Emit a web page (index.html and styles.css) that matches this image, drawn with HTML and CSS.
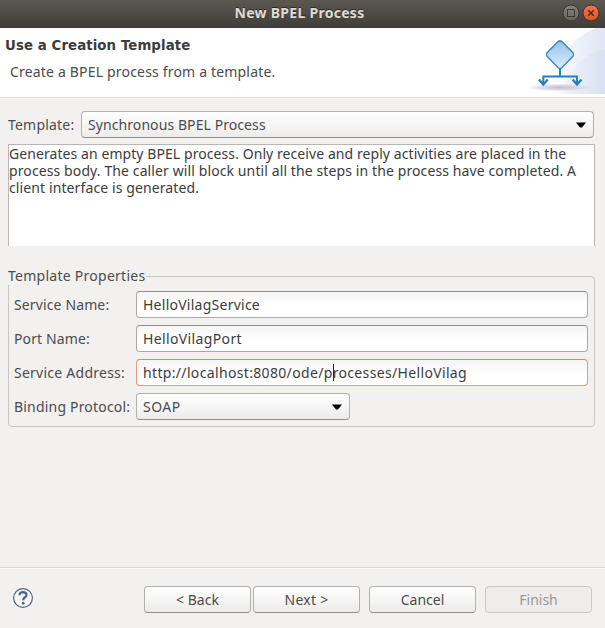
FILE: index.html
```html
<!DOCTYPE html>
<html lang="en">
<head>
<meta charset="utf-8">
<title>New BPEL Process</title>
<link rel="stylesheet" href="styles.css">
</head>
<body>
<div class="titlebar">
  <span class="title">New BPEL Process</span>
  <svg class="controls" width="46" height="20" viewBox="0 0 46 20">
    <defs>
      <linearGradient id="gray" x1="0" y1="0" x2="0" y2="1"><stop offset="0" stop-color="#85847c"/><stop offset="1" stop-color="#65645e"/></linearGradient>
      <linearGradient id="orange" x1="0" y1="0" x2="0" y2="1"><stop offset="0" stop-color="#f4744e"/><stop offset="1" stop-color="#e4501f"/></linearGradient>
    </defs>
    <circle cx="11" cy="10" r="8" fill="url(#gray)" stroke="#373632"/>
    <rect x="7.500" y="6.500" width="7" height="7" fill="none" stroke="#3b3a36"/>
    <circle cx="31" cy="10" r="8" fill="url(#orange)" stroke="#373632"/>
    <path d="M28.300 7.300l5.400 5.400M33.700 7.300l-5.400 5.400" stroke="#4a2a1c" stroke-width="1.500"/>
  </svg>
</div>
<header class="banner">
  <div>
    <h1>Use a Creation Template</h1>
    <p>Create a BPEL process from a template.</p>
  </div>
  <svg class="art" width="75" height="69" viewBox="0 0 75 69">
    <defs>
      <linearGradient id="swoop" x1="0" y1="0" x2="1" y2="0"><stop offset="0" stop-color="#fff"/><stop offset="1" stop-color="#dfe5f5"/></linearGradient>
      <linearGradient id="swoop2" x1="0" y1="0" x2="1" y2="0"><stop offset="0" stop-color="#edf1fa"/><stop offset="1" stop-color="#d5def2"/></linearGradient>
      <linearGradient id="blue" x1="0" y1="0" x2="0" y2="1"><stop offset="0" stop-color="#98c2ea"/><stop offset="1" stop-color="#d9edf8"/></linearGradient>
      <radialGradient id="shadow"><stop offset="0" stop-color="#bdb3c9" stop-opacity=".9"/><stop offset=".6" stop-color="#cfc9dc" stop-opacity=".6"/><stop offset="1" stop-color="#d8d8e8" stop-opacity="0"/></radialGradient>
    </defs>
    <path d="M75 0H66Q40 10 28 36Q22 50 20 66H75Z" fill="url(#swoop)"/>
    <path d="M75 21Q53 26 42 44Q36 55 34 66H75Z" fill="url(#swoop2)" opacity=".7"/>
    <ellipse cx="29" cy="59.500" rx="34" ry="4" fill="url(#shadow)"/>
    <path d="M28.200 13.500Q30 12 31.800 13.500L43 24.700Q44.300 26.500 43 28.300L31.800 39.800Q30 41.300 28.200 39.800L17 28.300Q15.700 26.500 17 24.700Z" fill="url(#blue)" stroke="#3284c5" stroke-width="1.300"/>
    <path d="M30 41V48M13.300 57V48.500H47V57" fill="none" stroke="#1f80bd" stroke-width="1.900"/>
    <path d="M9 51.500L13.300 56.500L17.700 51.500M42.700 51.500L47 56.500L51.500 51.500" fill="none" stroke="#1f80bd" stroke-width="2.300"/>
  </svg>
</header>
<main>
  <div class="template-row">
    <span class="label t-template">Template:</span>
    <div class="combo t-sync"><span>Synchronous BPEL Process</span><svg width="10" height="6"><path d="M0 .5H10L6 5.500H4Z"/></svg></div>
  </div>
  <div class="description">
    <div class="d1">Generates an empty BPEL process. Only receive and reply activities are placed in the</div>
    <div class="d2">process body. The caller will block until all the steps in the process have completed. A</div>
    <div class="d3">client interface is generated.</div>
  </div>
  <fieldset>
    <legend>Template Properties</legend>
    <div class="form">
      <span class="label">Service Name:</span><div class="field f-name">HelloVilagService</div>
      <span class="label">Port Name:</span><div class="field f-port">HelloVilagPort</div>
      <span class="label t-address">Service Address:</span><div class="field focused">http://localhost:8080/ode/p<i class="caret"></i>rocesses/HelloVilag</div>
      <span class="label t-binding">Binding Protocol:</span><div class="combo small"><span>SOAP</span><svg width="10" height="6"><path d="M0 .5H10L6 5.500H4Z"/></svg></div>
    </div>
  </fieldset>
</main>
<footer>
  <svg class="help" width="22" height="22" viewBox="0 0 22 22">
    <circle cx="11" cy="11" r="9.400" fill="#f6f6f7" stroke="#4c6285" stroke-width="1.200"/>
    <path d="M7.500 8.300Q7.400 5.300 11 5.200Q14.500 5.300 14.500 8Q14.500 9.400 12.800 10.500Q11.200 11.500 11.200 13.300" fill="none" stroke="#4c6285" stroke-width="2.200"/>
    <circle cx="11.200" cy="16.200" r="1.400" fill="#4c6285"/>
  </svg>
  <div class="buttons">
    <div class="button">&lt; Back</div><div class="button next">Next &gt;</div><div class="button cancel">Cancel</div><div class="button finish">Finish</div>
  </div>
</footer>
</body>
</html>
```
FILE: styles.css
```css
* { box-sizing: border-box; }
body {
  margin: 0;
  width: 605px;
  height: 628px;
  display: flex;
  flex-direction: column;
  overflow: hidden;
  background: #f2f1f0;
  color: #4c4c4c;
  font: 14px/17px "Noto Sans", sans-serif;
  white-space: nowrap;
}
svg { display: block; flex: none; }
.titlebar {
  height: 28px;
  display: grid;
  grid-template-columns: 1fr auto 1fr;
  align-items: center;
  padding-bottom: 2px;
  background: linear-gradient(#5b5851, #3e3d39);
}
.title {
  grid-column: 2;
  margin: 0 6px 2px 0;
  font-weight: bold;
  letter-spacing: .28px;
  color: #dfdbd2;
  text-shadow: 0 -1px #2b2a28;
}
.controls { justify-self: end; margin-right: -1px; }
.banner {
  height: 70px;
  display: flex;
  justify-content: space-between;
  background: #fff;
  border-bottom: 1px solid #dcdad8;
}
h1 {
  margin: 9px 0 0 5px;
  font: bold 13.333px/18px "DejaVu Sans", sans-serif;
  letter-spacing: .08px;
  color: #3c3c3c;
}
.banner p { margin: 8px 0 0 10px; letter-spacing: .18px; }
main { padding: 13px 10px 0 8px; flex: 1; border-top: 1px solid #fafaf9; }
.template-row { display: flex; height: 27px; align-items: center; margin-top: -1px; }
.label { letter-spacing: .13px; }
.template-row .label { width: 73px; letter-spacing: .2px; }
.t-address { letter-spacing: .25px; }
.t-binding { letter-spacing: .19px; }
.combo {
  height: 27px;
  flex: 1;
  display: flex;
  align-items: center;
  justify-content: space-between;
  padding: 0 7px 1px 6px;
  border: 1px solid #b2b1b0;
  border-bottom-color: #8f8e8d;
  border-radius: 4px;
  background: linear-gradient(#fff, #edeceb);
  letter-spacing: .08px;
}
.combo svg { fill: #000; margin-top: 1px; }
.template-row .combo { margin-right: 1px; }
.description {
  height: 102px;
  margin: 6px 0 0;
  padding: 0;
  border: 1px solid #b7b6b4;
  border-bottom: 0;
  background: #fff;
  color: #3c3c3c;
}
.d1 { letter-spacing: .075px; }
.d2 { letter-spacing: .107px; }
.d3 { letter-spacing: .11px; }
fieldset {
  height: 160px;
  margin: 21px 0 0;
  padding: 0;
  border: 1px solid #c7c6c4;
  border-radius: 4px;
}
legend { margin-left: -1px; padding: 0 1px 0 0; height: 18px; letter-spacing: .26px; }
.form {
  display: grid;
  grid-template-columns: 122px 452px;
  row-gap: 7px;
  align-items: center;
  padding: 6px 0 0 5px;
}
.field {
  height: 27px;
  padding: 4px 6px;
  border: 1px solid #aaa9a8;
  border-top-color: #8f8e8d;
  border-radius: 4px;
  background: linear-gradient(#f5f5f5, #fff 60%);
  color: #3c3c3c;
}
.f-name { letter-spacing: .25px; }
.f-port { letter-spacing: .37px; }
.focused { border-color: #e89a7d; border-top-color: #df845f; letter-spacing: .34px; }
.caret { display: inline-block; width: 1px; height: 17px; margin: 0 -1px 0 0; vertical-align: top; background: #222; }
.combo.small { width: 214px; letter-spacing: .5px; }
footer {
  height: 61px;
  display: flex;
  justify-content: space-between;
  align-items: flex-start;
  padding: 18px 13px 0 12px;
  border-top: 1px solid #dcdad8;
  box-shadow: inset 0 1px #fafaf9;
}
.help { margin-top: 1px; }
.buttons { display: flex; gap: 2px; }
.button {
  width: 107px;
  height: 27px;
  padding-top: 4px;
  border: 1px solid #b2b1b0;
  border-bottom-color: #8f8e8d;
  border-radius: 4px;
  background: linear-gradient(#fff, #edeceb);
  text-align: center;
}
.next { letter-spacing: .25px; }
.cancel { margin: 0 7px; }
.finish { background: #eeedec; border-color: #cac9c7; color: #999; }
```
